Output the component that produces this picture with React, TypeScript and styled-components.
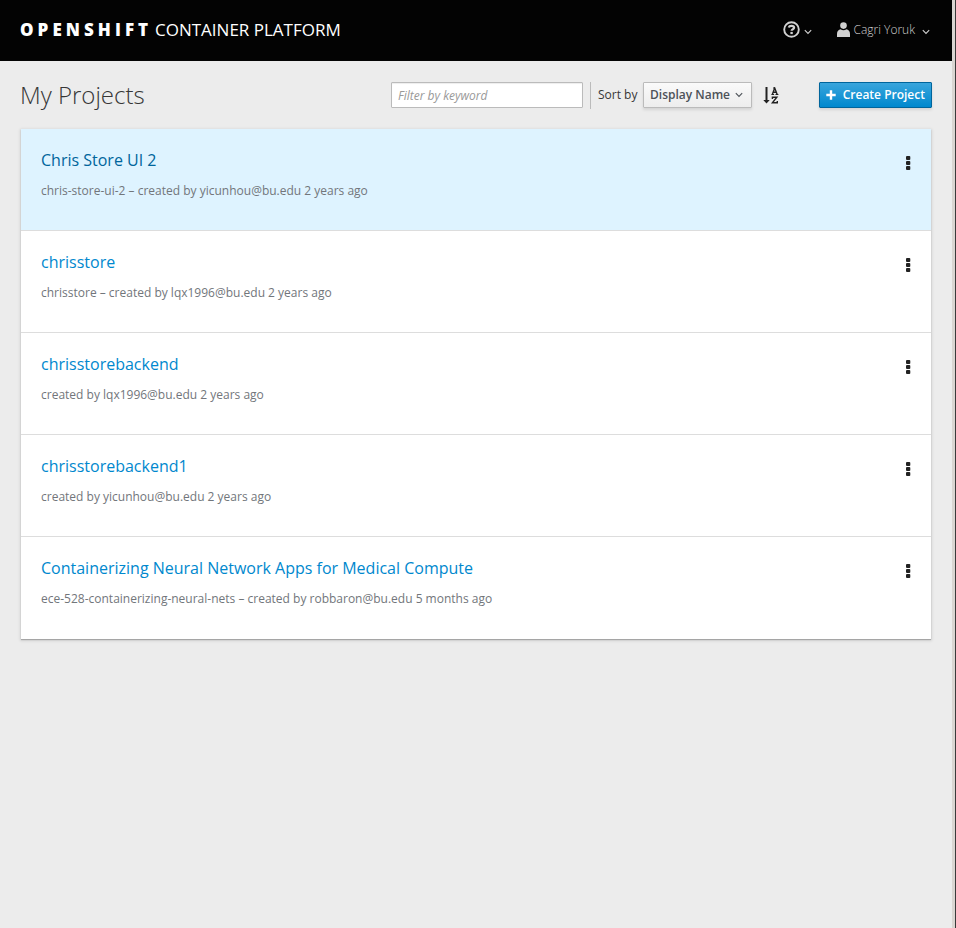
import React from "react";
import styled, { createGlobalStyle } from "styled-components";

const GlobalStyle = createGlobalStyle`
  *, *::before, *::after { box-sizing: border-box; }
  html, body { margin: 0; height: 100%; }
  body {
    background: #ececec;
    color: #363636;
    font: 12px/20px "Open Sans", "Noto Sans", sans-serif;
    overflow: hidden;
  }
  button, input { font: inherit; }
  svg { display: block; flex: none; }
`;

const Window = styled.div`
  height: 928px;
  border-right: 1px solid #3a3a3a;
  background: #d9d5d1;
  padding-right: 3px;
`;

const Page = styled.div`
  height: 100%;
  background: #ececec;
`;

const Masthead = styled.header`
  display: flex;
  align-items: center;
  justify-content: space-between;
  height: 61px;
  padding: 0 22px 2px 20px;
  background: #030303;
`;

const Brand = styled.div`
  display: flex;
  align-items: baseline;
  color: #fff;
  font-size: 17px;
  line-height: 24px;
  white-space: nowrap;
`;

const BrandStrong = styled.span`
  width: 135px;
  font-weight: 800;
  letter-spacing: 4.05px;
`;

const BrandLight = styled.span`
  font-weight: 400;
`;

const Utilities = styled.nav`
  display: flex;
  align-items: center;
  gap: 25px;
`;

const UtilityButton = styled.button<{ $gap: number }>`
  display: flex;
  align-items: center;
  gap: ${(p) => p.$gap}px;
  padding: 0;
  border: 0;
  background: none;
  color: #d1d1d1;
  font-weight: 300;
  line-height: 20px;
`;

const UserName = styled.span`
  margin-right: 3px;
  white-space: nowrap;
`;

const LowerIcon = styled.span`
  padding-top: 5px;
`;

const Toolbar = styled.div`
  display: flex;
  align-items: center;
  height: 68px;
  padding: 0 20px;
`;

const Title = styled.h1`
  flex: 1;
  margin: 0;
  font-size: 24px;
  font-weight: 300;
  line-height: 26px;
`;

const FilterInput = styled.input`
  width: 192px;
  height: 26px;
  padding: 2px 6px;
  border: 1px solid #bbb;
  border-radius: 1px;
  background: #fff;
  box-shadow: inset 0 1px 1px rgba(3, 3, 3, 0.075);
  outline: 0;
  &::placeholder {
    color: #999;
    font-style: italic;
    opacity: 1;
  }
`;

const SortGroup = styled.div`
  display: flex;
  align-items: center;
  height: 27px;
  margin-left: 7px;
  padding-left: 7px;
  border-left: 1px solid #bbb;
`;

const SortLabel = styled.span`
  width: 45px;
  white-space: nowrap;
`;

const SelectButton = styled.button`
  display: flex;
  align-items: center;
  justify-content: space-between;
  width: 109px;
  height: 26px;
  padding: 0 8px 1px 6px;
  border: 1px solid #bbb;
  border-radius: 1px;
  background: linear-gradient(#fafafa, #ededed);
  box-shadow: 0 2px 3px rgba(3, 3, 3, 0.1);
  color: #4d5258;
  font-weight: 600;
  white-space: nowrap;
`;

const SortDirection = styled.button`
  display: flex;
  margin: 0 40px 0 11px;
  padding: 0;
  border: 0;
  background: none;
  color: #222;
`;

const PrimaryButton = styled.button`
  display: flex;
  align-items: center;
  justify-content: space-between;
  width: 113px;
  height: 26px;
  padding: 0 6px 1px;
  border: 1px solid #00659c;
  border-radius: 1px;
  background: linear-gradient(#39a5dc, #0088ce);
  box-shadow: 0 2px 3px rgba(3, 3, 3, 0.1);
  color: #fff;
  font-weight: 600;
  white-space: nowrap;
`;

const ProjectList = styled.ul`
  margin: 0 21px;
  padding: 0;
  list-style: none;
  background: #fff;
  box-shadow: 0 1px 1px rgba(3, 3, 3, 0.24), 0 1px 3px 1px rgba(3, 3, 3, 0.1);
`;

const ProjectRow = styled.li<{ $active?: boolean }>`
  display: flex;
  justify-content: space-between;
  height: 102px;
  padding: 20px 21px 0 20px;
  border-bottom: 1px solid #ddd;
  background: ${(p) => (p.$active ? "#def3ff" : "#fff")};
  &:last-child { border-bottom: 0; }
`;

const ProjectName = styled.h2<{ $active?: boolean }>`
  margin: 0;
  color: ${(p) => (p.$active ? "#00659c" : "#0088ce")};
  font-size: 16px;
  font-weight: 400;
  line-height: 22px;
`;

const ProjectMeta = styled.p`
  margin: 10px 0 0;
  color: #72767b;
`;

const KebabButton = styled.button`
  align-self: flex-start;
  margin-top: 7px;
  padding: 0;
  border: 0;
  background: none;
  color: #222;
`;

const Chevron = () => (
  <svg width="8" height="6" viewBox="0 0 8 6" fill="none" stroke="currentColor" strokeWidth="1.1">
    <path d="M.8 1.2 4 4.4l3.2-3.2" />
  </svg>
);

const HelpIcon = () => (
  <svg width="17" height="17" viewBox="0 0 17 17" fill="none" stroke="currentColor">
    <circle cx="8.5" cy="8.5" r="7.3" strokeWidth="1.9" />
    <path d="M5.7 6.5C6.1 5.2 7.1 4.8 8.4 4.8c1.6 0 2.7.7 2.7 1.9 0 1.6-2.5 1.5-2.5 3.1" strokeWidth="2.2" />
    <path d="M7.4 12h2.4" strokeWidth="2.2" />
  </svg>
);

const UserIcon = () => (
  <svg width="13" height="15" viewBox="0 0 13 15" fill="currentColor">
    <circle cx="6.5" cy="3.6" r="3.3" />
    <path d="M0 15v-3c0-2.8 1.6-4.3 3.6-4.7 1.7 1.2 4.1 1.2 5.8 0C11.4 7.7 13 9.2 13 12v3Z" />
  </svg>
);

const SortIcon = () => (
  <svg width="16" height="17" viewBox="0 0 16 17" fill="none" stroke="currentColor">
    <path d="M3.5 0v14" strokeWidth="2" />
    <path d="M.3 13h6.400L3.500 16.500Z" fill="currentColor" stroke="none" />
    <path d="M9.400 7.200 11.700 1l2.400 6.200M10.200 5.300h3M10.300 1h1.700" strokeWidth="1.400" />
    <path d="M8.400 7.500h2.700M12.500 7.500h2.900" strokeWidth="1.200" />
    <path d="M9.400 12v-1.700h4.400L9.400 15.800h4.900V14" strokeWidth="1.400" />
  </svg>
);

const PlusIcon = () => (
  <svg width="10" height="10" viewBox="0 0 10 10" stroke="currentColor" strokeWidth="2.4">
    <path d="M5 .3v9.400M.3 5h9.400" />
  </svg>
);

const KebabIcon = () => (
  <svg width="4" height="15" viewBox="0 0 4 15" fill="currentColor" overflow="visible">
    <rect width="4.3" height="4.1" rx="1" />
    <rect y="5" width="4.3" height="4.1" rx="1" />
    <rect y="10" width="4.3" height="4.1" rx="1" />
  </svg>
);

const projects = [
  { name: "Chris Store UI 2", meta: "chris-store-ui-2 – created by yicunhou@bu.edu 2 years ago", active: true },
  { name: "chrisstore", meta: "chrisstore – created by lqx1996@bu.edu 2 years ago" },
  { name: "chrisstorebackend", meta: "created by lqx1996@bu.edu 2 years ago" },
  { name: "chrisstorebackend1", meta: "created by yicunhou@bu.edu 2 years ago" },
  {
    name: "Containerizing Neural Network Apps for Medical Compute",
    meta: "ece-528-containerizing-neural-nets – created by robbaron@bu.edu 5 months ago",
  },
];

export default function App() {
  return (
    <Window>
      <GlobalStyle />
      <Page>
        <Masthead>
          <Brand>
            <BrandStrong>OPENSHIFT</BrandStrong>
            <BrandLight>CONTAINER PLATFORM</BrandLight>
          </Brand>
          <Utilities>
            <UtilityButton $gap={4} aria-label="Help">
              <HelpIcon />
              <LowerIcon><Chevron /></LowerIcon>
            </UtilityButton>
            <UtilityButton $gap={4}>
              <UserIcon />
              <UserName>Cagri Yoruk</UserName>
              <LowerIcon><Chevron /></LowerIcon>
            </UtilityButton>
          </Utilities>
        </Masthead>
        <Toolbar>
          <Title>My Projects</Title>
          <FilterInput placeholder="Filter by keyword" />
          <SortGroup>
            <SortLabel>Sort by</SortLabel>
            <SelectButton>
              Display Name
              <Chevron />
            </SelectButton>
            <SortDirection aria-label="Sort ascending"><SortIcon /></SortDirection>
          </SortGroup>
          <PrimaryButton>
            <PlusIcon />
            Create Project
          </PrimaryButton>
        </Toolbar>
        <ProjectList>
          {projects.map((p) => (
            <ProjectRow key={p.name} $active={p.active}>
              <div>
                <ProjectName $active={p.active}>{p.name}</ProjectName>
                <ProjectMeta>{p.meta}</ProjectMeta>
              </div>
              <KebabButton aria-label="Project actions"><KebabIcon /></KebabButton>
            </ProjectRow>
          ))}
        </ProjectList>
      </Page>
    </Window>
  );
}
